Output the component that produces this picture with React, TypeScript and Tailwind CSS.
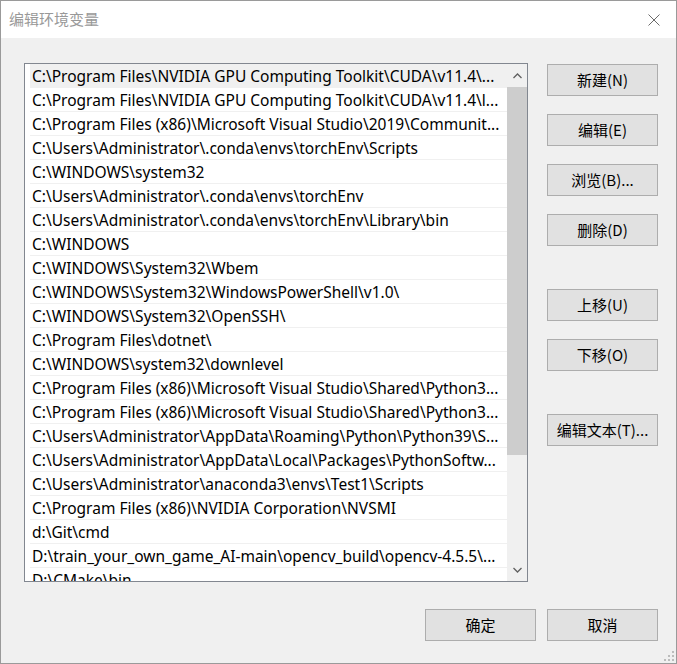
const paths = [
  "C:\\Program Files\\NVIDIA GPU Computing Toolkit\\CUDA\\v11.4\\...",
  "C:\\Program Files\\NVIDIA GPU Computing Toolkit\\CUDA\\v11.4\\l...",
  "C:\\Program Files (x86)\\Microsoft Visual Studio\\2019\\Communit...",
  "C:\\Users\\Administrator\\.conda\\envs\\torchEnv\\Scripts",
  "C:\\WINDOWS\\system32",
  "C:\\Users\\Administrator\\.conda\\envs\\torchEnv",
  "C:\\Users\\Administrator\\.conda\\envs\\torchEnv\\Library\\bin",
  "C:\\WINDOWS",
  "C:\\WINDOWS\\System32\\Wbem",
  "C:\\WINDOWS\\System32\\WindowsPowerShell\\v1.0\\",
  "C:\\WINDOWS\\System32\\OpenSSH\\",
  "C:\\Program Files\\dotnet\\",
  "C:\\WINDOWS\\system32\\downlevel",
  "C:\\Program Files (x86)\\Microsoft Visual Studio\\Shared\\Python3...",
  "C:\\Program Files (x86)\\Microsoft Visual Studio\\Shared\\Python3...",
  "C:\\Users\\Administrator\\AppData\\Roaming\\Python\\Python39\\S...",
  "C:\\Users\\Administrator\\AppData\\Local\\Packages\\PythonSoftw...",
  "C:\\Users\\Administrator\\anaconda3\\envs\\Test1\\Scripts",
  "C:\\Program Files (x86)\\NVIDIA Corporation\\NVSMI",
  "d:\\Git\\cmd",
  "D:\\train_your_own_game_AI-main\\opencv_build\\opencv-4.5.5\\...",
  "D:\\CMake\\bin",
];

function Btn({ label, className = "" }: { label: string; className?: string }) {
  return (
    <button className={`w-[111px] h-[32px] border border-[#adadad] bg-[#e1e1e1] text-[15px] text-black flex items-center justify-center ${className}`}>
      {label}
    </button>
  );
}

export default function App() {
  return (
    <div
      className="w-[677px] h-[664px] border border-[#9a9a9a] bg-[#f0f0f0] flex flex-col"
      style={{ fontFamily: '"Noto Sans", "Noto Sans CJK SC", sans-serif' }}
    >
      {/* title bar */}
      <div className="h-[37px] bg-white flex items-center justify-between pl-[8px] pr-[16px] shrink-0">
        <span className="text-[15px] text-[#999999]" style={{ fontFamily: '"Noto Sans CJK SC", sans-serif' }}>
          编辑环境变量
        </span>
        <svg width="12" height="12" viewBox="0 0 12 12">
          <path d="M0.5 0.5 L11.5 11.5 M11.5 0.5 L0.5 11.5" stroke="#6b6b6b" strokeWidth="1" fill="none" />
        </svg>
      </div>

      <div className="flex-1 flex flex-col pl-[23px] pr-[18px] pt-[25px]">
        <div className="flex">
          {/* list */}
          <div className="w-[504px] h-[519px] border border-[#828790] bg-white flex overflow-hidden">
            <div className="flex-1 pl-[5px] overflow-hidden">
              {paths.map((p, i) => (
                <div
                  key={i}
                  className={`h-[24px] border-b border-[#f0f0f0] pl-[2px] pt-[2px] flex items-center whitespace-nowrap overflow-hidden text-[15.5px] text-black ${i === 0 ? "bg-[#f0f0f0]" : ""}`}
                >
                  {p}
                </div>
              ))}
            </div>
            {/* scrollbar */}
            <div className="w-[20px] bg-[#f0f0f0] flex flex-col shrink-0">
              <div className="h-[23px] flex items-center justify-center">
                <svg width="9" height="6" viewBox="0 0 9 6">
                  <path d="M0.5 5 L4.5 1 L8.5 5" stroke="#606060" strokeWidth="1.3" fill="none" />
                </svg>
              </div>
              <div className="h-[368px] bg-[#cdcdcd]" />
              <div className="flex-1" />
              <div className="h-[23px] flex items-center justify-center">
                <svg width="9" height="6" viewBox="0 0 9 6">
                  <path d="M0.5 1 L4.5 5 L8.5 1" stroke="#606060" strokeWidth="1.3" fill="none" />
                </svg>
              </div>
            </div>
          </div>

          {/* buttons */}
          <div className="ml-[19px] pt-[1px] flex flex-col" style={{ fontFamily: '"Noto Sans CJK SC", sans-serif' }}>
            <Btn label="新建(N)" />
            <Btn label="编辑(E)" className="mt-[18px]" />
            <Btn label="浏览(B)..." className="mt-[18px]" />
            <Btn label="删除(D)" className="mt-[18px]" />
            <Btn label="上移(U)" className="mt-[43px]" />
            <Btn label="下移(O)" className="mt-[18px]" />
            <Btn label="编辑文本(T)..." className="mt-[43px]" />
          </div>
        </div>

        <div className="flex justify-end gap-[11px] mt-[27px]" style={{ fontFamily: '"Noto Sans CJK SC", sans-serif' }}>
          <Btn label="确定" />
          <Btn label="取消" />
        </div>
      </div>

      {/* resize grip */}
      <div className="relative">
        <svg className="absolute right-[1px] bottom-[1px]" width="11" height="11" viewBox="0 0 11 11">
          <rect x="8" y="0" width="2" height="2" fill="#bcbcbc" />
          <rect x="4" y="4" width="2" height="2" fill="#bcbcbc" />
          <rect x="8" y="4" width="2" height="2" fill="#bcbcbc" />
          <rect x="0" y="8" width="2" height="2" fill="#bcbcbc" />
          <rect x="4" y="8" width="2" height="2" fill="#bcbcbc" />
          <rect x="8" y="8" width="2" height="2" fill="#bcbcbc" />
        </svg>
      </div>
    </div>
  );
}
